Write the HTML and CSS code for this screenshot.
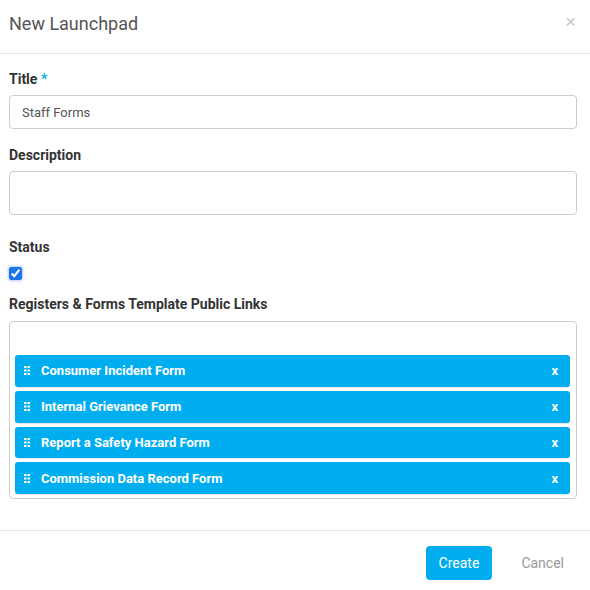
FILE: index.html
```html
<!DOCTYPE html>
<html lang="en">
<head>
  <meta charset="UTF-8" />
  <meta name="viewport" content="width=device-width, initial-scale=1.0" />
  <title>New Launchpad</title>
  <link rel="stylesheet" href="styles.css">
</head>
<body>

  <div class="modal">
    <!-- Header -->
    <div class="modal-header">
      <h4 class="modal-title">New Launchpad</h4>
      <button class="close">&times;</button>
    </div>

    <!-- Form -->
    <div class="modal-body">
      <div class="field">
        <label>Title <span class="required">*</span></label>
        <input type="text" class="form-control" value="Staff Forms" />
      </div>

      <div class="field">
        <label>Description</label>
        <textarea class="form-control description"></textarea>
      </div>

      <div class="field">
        <label>Status</label>
        <input type="checkbox" class="status-check" checked />
      </div>

      <div class="field">
        <label>Registers &amp; Forms Template Public Links</label>
        <div class="links-box">
          <div class="link-item">
            <svg class="handle" width="6" height="9" viewBox="0 0 6 9"><path d="M0 0h2.5v2H0zM3.5 0H6v2H3.5zM0 3.5h2.5v2H0zM3.5 3.5H6v2H3.5zM0 7h2.5v2H0zM3.5 7H6v2H3.5z" fill="#fff"/></svg>
            <span class="link-name">Consumer Incident Form</span><span class="remove">x</span>
          </div>
          <div class="link-item">
            <svg class="handle" width="6" height="9" viewBox="0 0 6 9"><path d="M0 0h2.5v2H0zM3.5 0H6v2H3.5zM0 3.5h2.5v2H0zM3.5 3.5H6v2H3.5zM0 7h2.5v2H0zM3.5 7H6v2H3.5z" fill="#fff"/></svg>
            <span class="link-name">Internal Grievance Form</span><span class="remove">x</span>
          </div>
          <div class="link-item">
            <svg class="handle" width="6" height="9" viewBox="0 0 6 9"><path d="M0 0h2.5v2H0zM3.5 0H6v2H3.5zM0 3.5h2.5v2H0zM3.5 3.5H6v2H3.5zM0 7h2.5v2H0zM3.5 7H6v2H3.5z" fill="#fff"/></svg>
            <span class="link-name">Report a Safety Hazard Form</span><span class="remove">x</span>
          </div>
          <div class="link-item">
            <svg class="handle" width="6" height="9" viewBox="0 0 6 9"><path d="M0 0h2.5v2H0zM3.5 0H6v2H3.5zM0 3.5h2.5v2H0zM3.5 3.5H6v2H3.5zM0 7h2.5v2H0zM3.5 7H6v2H3.5z" fill="#fff"/></svg>
            <span class="link-name">Commission Data Record Form</span><span class="remove">x</span>
          </div>
        </div>
      </div>
    </div>

    <!-- Footer -->
    <div class="modal-footer">
      <button class="btn btn-primary">Create</button>
      <button class="btn btn-link">Cancel</button>
    </div>
  </div>

</body>
</html>
```

FILE: styles.css
```css
body {
  margin: 0;
  padding: 0;
  background-color: #ffffff;
  font-family: Roboto, 'Liberation Sans', sans-serif;
  color: #333;
}

.modal {
  width: 590px;
}

.modal-header {
  display: flex;
  justify-content: space-between;
  align-items: flex-start;
  padding: 13px 13px 19px 9px;
  border-bottom: 1px solid #e5e5e5;
}

.modal-title {
  margin: 0;
  font-size: 18px;
  line-height: 21px;
  font-weight: 400;
  color: #555;
}

.close {
  border: none;
  background: none;
  padding: 0;
  margin-top: -2px;
  margin-right: 1px;
  font-size: 19px;
  line-height: 21px;
  color: #c8c8c8;
  cursor: pointer;
}

.modal-body {
  padding: 15px 13px 31px 9px;
}

.field {
  display: flex;
  flex-direction: column;
  margin-bottom: 16px;
}

.field:last-child {
  margin-bottom: 0;
}

.field label {
  font-size: 14px;
  line-height: 20px;
  font-weight: 700;
  color: #333;
  margin-bottom: 6px;
}

.required {
  color: #00aeef;
}

.form-control {
  box-sizing: border-box;
  width: 100%;
  height: 34px;
  padding: 6px 12px;
  font-family: inherit;
  font-size: 13px;
  color: #555;
  border: 1px solid #ccc;
  border-radius: 4px;
  outline: none;
}

.description {
  height: 44px;
  resize: none;
  display: block;
}

.field:nth-child(2) {
  margin-bottom: 22px;
}

.status-check {
  width: 13px;
  height: 13px;
  margin: 4px 0 0 0;
  accent-color: #1a73e8;
  box-shadow: 0 0 3px rgba(26, 115, 232, 0.6);
  border-radius: 2px;
}

.field:nth-child(3) {
  margin-bottom: 14px;
}

.field:nth-child(4) label {
  margin-bottom: 7px;
}

.links-box {
  box-sizing: border-box;
  height: 178px;
  padding: 33px 6px 4px 5px;
  border: 1px solid #ccc;
  border-radius: 4px;
  display: flex;
  flex-direction: column;
  gap: 4px;
}

.link-item {
  display: flex;
  align-items: center;
  height: 32px;
  padding: 0 12px 0 9px;
  background-color: #00aeef;
  border-radius: 3px;
  color: #fff;
  font-size: 13px;
  font-weight: 700;
  box-shadow: 0 1px 1px rgba(0, 0, 0, 0.1);
}

.handle {
  margin-right: 11px;
}

.link-name {
  flex: 1;
}

.remove {
  font-size: 13px;
  cursor: pointer;
}

.modal-footer {
  display: flex;
  justify-content: flex-end;
  gap: 16px;
  padding: 15px 13px 20px;
  border-top: 1px solid #e5e5e5;
}

.btn {
  height: 34px;
  padding: 0 13px;
  font-family: inherit;
  font-size: 14px;
  border: none;
  border-radius: 4px;
  cursor: pointer;
}

.btn-primary {
  background-color: #00aeef;
  color: #fff;
}

.btn-link {
  background: none;
  color: #999;
}
```
